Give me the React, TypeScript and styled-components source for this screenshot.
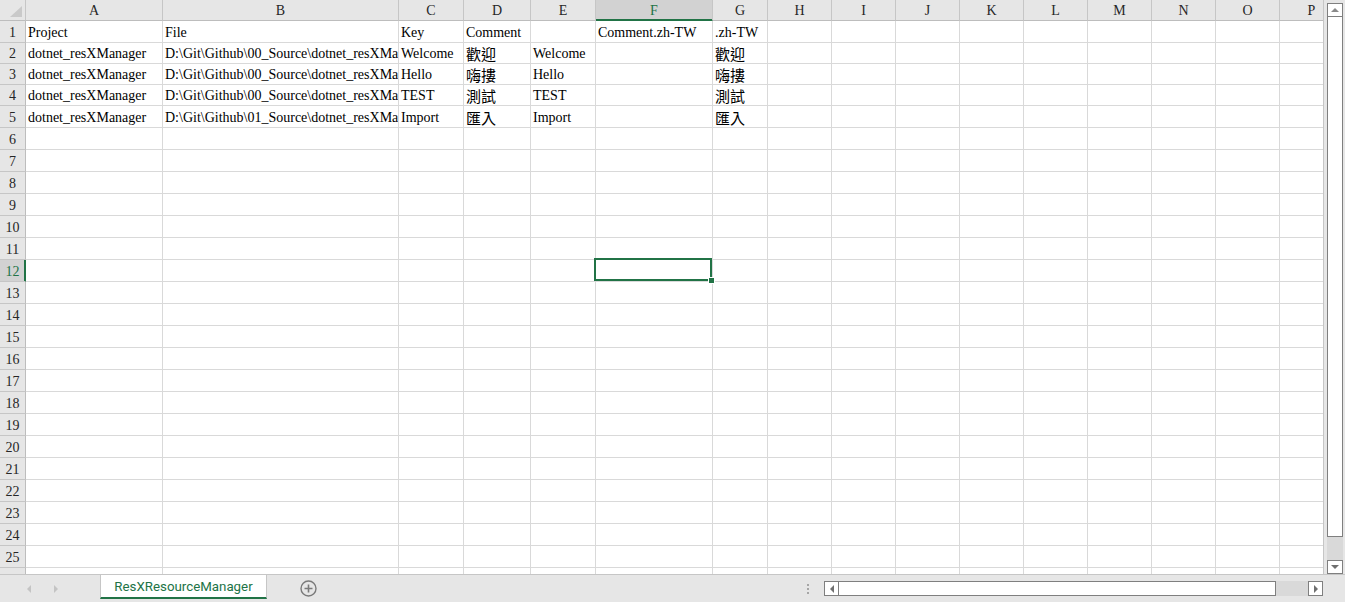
import React from "react";
import styled, { createGlobalStyle, css } from "styled-components";

const GREEN = "#217346";
const GRID = "#d9d9d9";
const HEAD_LINE = "#c6c6c6";
const HEAD_BG = "#e6e6e6";
const HEAD_ACTIVE = "#d2d2d2";

const GlobalStyle = createGlobalStyle`
  html, body { margin: 0; padding: 0; overflow: hidden; background: ${HEAD_BG}; }
  *, *::before, *::after { box-sizing: border-box; }
`;

const COLS: { key: string; w: number }[] = [
  { key: "A", w: 137 },
  { key: "B", w: 236 },
  { key: "C", w: 65 },
  { key: "D", w: 67 },
  { key: "E", w: 65 },
  { key: "F", w: 117 },
  { key: "G", w: 55 },
  ...["H", "I", "J", "K", "L", "M", "N", "O", "P"].map((k) => ({ key: k, w: 64 })),
];

const PATH0 = "D:\\Git\\Github\\00_Source\\dotnet_resXMa";
const PATH1 = "D:\\Git\\Github\\01_Source\\dotnet_resXMa";

const DATA: string[][] = [
  ["Project", "File", "Key", "Comment", "", "Comment.zh-TW", ".zh-TW"],
  ["dotnet_resXManager", PATH0, "Welcome", "歡迎", "Welcome", "", "歡迎"],
  ["dotnet_resXManager", PATH0, "Hello", "嗨摟", "Hello", "", "嗨摟"],
  ["dotnet_resXManager", PATH0, "TEST", "測試", "TEST", "", "測試"],
  ["dotnet_resXManager", PATH1, "Import", "匯入", "Import", "", "匯入"],
];

const ROW_COUNT = 26;
const ACTIVE_ROW = 12;
const ACTIVE_COL = "F";
const rowHeight = (r: number) => (r === 1 ? 22 : r <= 4 ? 21 : 22);

const Window = styled.div`
  width: 1345px;
  height: 602px;
  display: flex;
  flex-direction: column;
  background: ${HEAD_BG};
  overflow: hidden;
`;

const Main = styled.div`
  display: flex;
  height: 574px;
`;

const Sheet = styled.div`
  flex: 0 0 1324px;
  height: 574px;
  overflow: hidden;
  background: #fff;
  border-right: 1px solid ${HEAD_LINE};
  font-family: "Liberation Serif", "Noto Sans CJK TC", serif;
  font-size: 14px;
  color: #000;
`;

const Row = styled.div<{ $h: number }>`
  display: flex;
  height: ${(p) => p.$h}px;
`;

const Corner = styled.div`
  position: relative;
  flex: 0 0 26px;
  background: ${HEAD_BG};
  border-right: 1px solid ${HEAD_LINE};
  border-bottom: 1px solid #bdbdbd;
  &::after {
    content: "";
    position: absolute;
    right: 3px;
    bottom: 3px;
    width: 0;
    height: 0;
    border-left: 12px solid transparent;
    border-bottom: 11px solid #c9c9c9;
  }
`;

const ColHeader = styled.div<{ $w: number; $active?: boolean }>`
  flex: 0 0 ${(p) => p.$w}px;
  display: flex;
  justify-content: center;
  align-items: flex-end;
  line-height: 16px;
  padding-bottom: 1px;
  color: #262626;
  background: ${HEAD_BG};
  border-right: 1px solid ${HEAD_LINE};
  border-bottom: 1px solid #bdbdbd;
  ${(p) =>
    p.$active &&
    css`
      background: ${HEAD_ACTIVE};
      color: ${GREEN};
      border-bottom-color: ${GREEN};
      box-shadow: inset 0 -1px 0 ${GREEN};
    `}
`;

const RowHeader = styled.div<{ $active?: boolean }>`
  flex: 0 0 26px;
  display: flex;
  justify-content: center;
  align-items: flex-end;
  line-height: 16px;
  padding-bottom: 1px;
  color: #262626;
  background: ${HEAD_BG};
  border-right: 1px solid #bdbdbd;
  border-bottom: 1px solid ${HEAD_LINE};
  ${(p) =>
    p.$active &&
    css`
      background: ${HEAD_ACTIVE};
      color: ${GREEN};
      border-right-color: ${GREEN};
      box-shadow: inset -1px 0 0 ${GREEN};
    `}
`;

const Cell = styled.div<{ $w: number }>`
  position: relative;
  flex: 0 0 ${(p) => p.$w}px;
  display: flex;
  align-items: flex-end;
  padding: 0 2px 1px 2px;
  line-height: 16px;
  white-space: nowrap;
  overflow: hidden;
  border-right: 1px solid ${GRID};
  border-bottom: 1px solid ${GRID};
`;

const ActiveCell = styled(Cell)`
  overflow: visible;
`;

const CellText = styled.span<{ $cjk?: boolean }>`
  ${(p) =>
    p.$cjk &&
    css`
      font-family: "Noto Sans CJK TC", "Liberation Serif", sans-serif;
      font-size: 15px;
    `}
`;

const Selection = styled.div`
  position: absolute;
  top: -2px;
  left: -2px;
  right: 0;
  bottom: 0;
  border: 2px solid ${GREEN};
  z-index: 2;
  pointer-events: none;
`;

const FillHandle = styled.div`
  position: absolute;
  right: -2px;
  bottom: -2px;
  width: 5px;
  height: 5px;
  background: ${GREEN};
  box-shadow: 0 0 0 1px #fff;
  z-index: 3;
`;

/* ---------- scrollbars ---------- */

const VScroll = styled.div`
  flex: 1;
  display: flex;
  flex-direction: column;
  padding: 3px 2px 0 3px;
`;

const ArrowBox = styled.div<{ $size: number }>`
  flex: 0 0 ${(p) => p.$size}px;
  display: flex;
  align-items: center;
  justify-content: center;
  background: #fff;
  border: 1px solid #7f7f7f;
`;

const Tri = styled.span<{ $dir: "up" | "down" | "left" | "right"; $color?: string }>`
  width: 0;
  height: 0;
  ${(p) => {
    const c = p.$color ?? "#7a7a7a";
    switch (p.$dir) {
      case "up":
        return css`
          border-left: 4px solid transparent;
          border-right: 4px solid transparent;
          border-bottom: 4px solid ${c};
        `;
      case "down":
        return css`
          border-left: 4px solid transparent;
          border-right: 4px solid transparent;
          border-top: 4px solid ${c};
        `;
      case "left":
        return css`
          border-top: 4px solid transparent;
          border-bottom: 4px solid transparent;
          border-right: 4px solid ${c};
        `;
      default:
        return css`
          border-top: 4px solid transparent;
          border-bottom: 4px solid transparent;
          border-left: 4px solid ${c};
        `;
    }
  }}
`;

const VThumb = styled.div`
  flex: 1;
  background: #fff;
  border: 1px solid #7f7f7f;
  border-top: none;
`;

const VTrack = styled.div`
  flex: 0 0 23px;
  background: #d9d9d9;
`;

const BottomBar = styled.div`
  flex: 1;
  display: flex;
  align-items: center;
  border-top: 1px solid ${HEAD_LINE};
  padding-right: 22px;
`;

const SheetNav = styled.div`
  flex: 0 0 100px;
  align-self: stretch;
  display: flex;
  align-items: center;
  gap: 23px;
  padding-left: 27px;
`;

const SheetTab = styled.div`
  flex: 0 0 167px;
  align-self: flex-start;
  height: 24px;
  display: flex;
  align-items: center;
  justify-content: center;
  padding-top: 1px;
  background: #fff;
  border-left: 1px solid ${HEAD_LINE};
  border-right: 1px solid ${HEAD_LINE};
  border-bottom: 2px solid ${GREEN};
  color: ${GREEN};
  font-family: Roboto, "Liberation Sans", sans-serif;
  font-size: 13.3px;
  line-height: 21px;
`;

const AddButton = styled.div`
  margin-left: 33px;
  width: 17px;
  height: 17px;
  display: flex;
`;

const Spacer = styled.div`
  flex: 1;
`;

const Dots = styled.div`
  display: flex;
  flex-direction: column;
  gap: 2px;
  margin-right: 15px;
  & > span {
    width: 2px;
    height: 2px;
    background: #a6a6a6;
  }
`;

const HScroll = styled.div`
  flex: 0 0 499px;
  height: 15px;
  display: flex;
`;

const HThumb = styled.div`
  flex: 1;
  background: #fff;
  border: 1px solid #7f7f7f;
  border-left: none;
`;

const HTrack = styled.div`
  flex: 0 0 32px;
  background: #d9d9d9;
`;

const hasCJK = (s: string) => /[\u3400-\u9fff]/.test(s);

export default function App() {
  const rows = Array.from({ length: ROW_COUNT }, (_, i) => i + 1);
  return (
    <>
      <GlobalStyle />
      <Window>
        <Main>
          <Sheet>
            <Row $h={21}>
              <Corner />
              {COLS.map((c) => (
                <ColHeader key={c.key} $w={c.w} $active={c.key === ACTIVE_COL}>
                  {c.key}
                </ColHeader>
              ))}
            </Row>
            {rows.map((r) => {
              const data = DATA[r - 1] ?? [];
              return (
                <Row key={r} $h={rowHeight(r)}>
                  <RowHeader $active={r === ACTIVE_ROW}>{r < ROW_COUNT ? r : ""}</RowHeader>
                  {COLS.map((c, ci) => {
                    const v = data[ci] ?? "";
                    if (r === ACTIVE_ROW && c.key === ACTIVE_COL) {
                      return (
                        <ActiveCell key={c.key} $w={c.w}>
                          <Selection />
                          <FillHandle />
                        </ActiveCell>
                      );
                    }
                    return (
                      <Cell key={c.key} $w={c.w}>
                        {v && <CellText $cjk={hasCJK(v)}>{v}</CellText>}
                      </Cell>
                    );
                  })}
                </Row>
              );
            })}
          </Sheet>
          <VScroll>
            <ArrowBox $size={14}>
              <Tri $dir="up" $color="#8a8a8a" />
            </ArrowBox>
            <VThumb />
            <VTrack />
            <ArrowBox $size={14}>
              <Tri $dir="down" $color="#6f6f6f" />
            </ArrowBox>
          </VScroll>
        </Main>
        <BottomBar>
          <SheetNav>
            <Tri $dir="left" $color="#c4c4c4" />
            <Tri $dir="right" $color="#c4c4c4" />
          </SheetNav>
          <SheetTab>ResXResourceManager</SheetTab>
          <AddButton>
            <svg width="17" height="17" viewBox="0 0 17 17">
              <circle cx="8.5" cy="8.5" r="7.5" fill="none" stroke="#7a7a7a" strokeWidth="1.4" />
              <path d="M8.5 4.5v8M4.5 8.5h8" stroke="#7a7a7a" strokeWidth="1.6" />
            </svg>
          </AddButton>
          <Spacer />
          <Dots>
            <span />
            <span />
            <span />
          </Dots>
          <HScroll>
            <ArrowBox $size={15}>
              <Tri $dir="left" $color="#6f6f6f" />
            </ArrowBox>
            <HThumb />
            <HTrack />
            <ArrowBox $size={15}>
              <Tri $dir="right" $color="#6f6f6f" />
            </ArrowBox>
          </HScroll>
        </BottomBar>
      </Window>
    </>
  );
}
